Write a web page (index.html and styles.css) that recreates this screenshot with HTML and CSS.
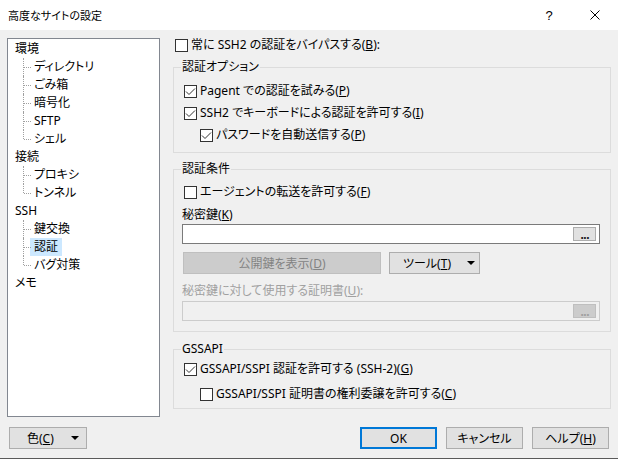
FILE: index.html
```html
<!DOCTYPE html>
<html>
  <head>
    <title>高度なサイトの設定</title>
    <meta charset="UTF-8" />
    <link rel="stylesheet" href="styles.css">
  </head>
  <body>
    <div class="window">
      <div class="titlebar">
        <span class="title">高度なサイトの設定</span>
        <span class="tb-btn tb-help">?</span>
        <span class="tb-btn tb-close">
          <svg width="10" height="10" viewBox="0 0 10 10"><path d="M0.5 0.5 L9.5 9.5 M9.5 0.5 L0.5 9.5" stroke="#000" stroke-width="1" fill="none"/></svg>
        </span>
      </div>

      <div class="main">
        <ul class="tree">
          <li><span class="node">環境</span>
            <ul class="children">
              <li><span class="node">ディレクトリ</span></li>
              <li><span class="node">ごみ箱</span></li>
              <li><span class="node">暗号化</span></li>
              <li><span class="node">SFTP</span></li>
              <li><span class="node">シェル</span></li>
            </ul>
          </li>
          <li><span class="node">接続</span>
            <ul class="children">
              <li><span class="node">プロキシ</span></li>
              <li><span class="node">トンネル</span></li>
            </ul>
          </li>
          <li><span class="node">SSH</span>
            <ul class="children">
              <li><span class="node">鍵交換</span></li>
              <li><span class="node selected">認証</span></li>
              <li><span class="node">バグ対策</span></li>
            </ul>
          </li>
          <li><span class="node">メモ</span></li>
        </ul>

        <div class="panel">
          <div class="check top"><span class="box"></span>常に SSH2 の認証をバイパスする(<u>B</u>):</div>

          <fieldset class="group g1">
            <legend>認証オプション</legend>
            <div class="check first"><span class="box"><svg width="11" height="11" viewBox="0 0 11 11"><polyline points="1,5.5 4,8.5 10,2.5" fill="none" stroke="#333" stroke-width="1"/></svg></span>Pagent での認証を試みる(<u>P</u>)</div>
            <div class="check"><span class="box"><svg width="11" height="11" viewBox="0 0 11 11"><polyline points="1,5.5 4,8.5 10,2.5" fill="none" stroke="#333" stroke-width="1"/></svg></span>SSH2 でキーボードによる認証を許可する(<u>I</u>)</div>
            <div class="check indent"><span class="box"><svg width="11" height="11" viewBox="0 0 11 11"><polyline points="1,5.5 4,8.5 10,2.5" fill="none" stroke="#333" stroke-width="1"/></svg></span>パスワードを自動送信する(<u>P</u>)</div>
          </fieldset>

          <fieldset class="group g2">
            <legend>認証条件</legend>
            <div class="check first"><span class="box"></span>エージェントの転送を許可する(<u>F</u>)</div>
            <div class="field-label">秘密鍵(<u>K</u>)</div>
            <div class="pathbox"><span class="browse">...</span></div>
            <div class="btn-row">
              <button class="btn key-btn" disabled>公開鍵を表示(<u>D</u>)</button>
              <button class="btn tool-btn"><span>ツール(<u>T</u>)</span>
                <svg width="8" height="4" viewBox="0 0 8 4"><polygon points="0,0 8,0 4,4" fill="#000"/></svg>
              </button>
            </div>
            <div class="field-label cert-label">秘密鍵に対して使用する証明書(<u>U</u>):</div>
            <div class="pathbox off"><span class="browse">...</span></div>
          </fieldset>

          <fieldset class="group g3">
            <legend>GSSAPI</legend>
            <div class="check first"><span class="box"><svg width="11" height="11" viewBox="0 0 11 11"><polyline points="1,5.5 4,8.5 10,2.5" fill="none" stroke="#333" stroke-width="1"/></svg></span>GSSAPI/SSPI 認証を許可する (SSH-2)(<u>G</u>)</div>
            <div class="check indent second"><span class="box"></span>GSSAPI/SSPI 証明書の権利委譲を許可する(<u>C</u>)</div>
          </fieldset>
        </div>
      </div>

      <div class="footer">
        <button class="btn color-btn"><span>色(<u>C</u>)</span>
          <svg width="8" height="4" viewBox="0 0 8 4"><polygon points="0,0 8,0 4,4" fill="#000"/></svg>
        </button>
        <span class="spacer"></span>
        <button class="btn dlg-btn default">OK</button>
        <button class="btn dlg-btn">キャンセル</button>
        <button class="btn dlg-btn">ヘルプ(<u>H</u>)</button>
      </div>
    </div>
  </body>
</html>
```

FILE: styles.css
```css
*{
    box-sizing: border-box;
}
body{
    margin: 0;
    font-family: "Noto Sans", "Noto Sans CJK JP", sans-serif;
    font-size: 12px;
    font-feature-settings: "palt";
    color: #000;
    background: #f0f0f0;
}
.window{
    width: 618px;
    height: 459px;
    display: flex;
    flex-direction: column;
    border-bottom: 1px solid #5a5a5a;
    overflow: hidden;
}

/* title bar */
.titlebar{
    flex: none;
    height: 30px;
    background: #fff;
    display: flex;
    align-items: center;
    padding-left: 8px;
}
.title{
    flex: 1;
    font-size: 11px;
}
.tb-btn{
    width: 46px;
    height: 30px;
    display: flex;
    align-items: center;
    justify-content: center;
}
.tb-help{
    font-family: "Liberation Sans", sans-serif;
    font-size: 13px;
}

/* main area */
.main{
    display: flex;
    gap: 13px;
    padding: 8px 7px 0;
}

.tree{
    flex: none;
    width: 153px;
    height: 379px;
    margin: 0;
    padding: 1px 0 0;
    list-style: none;
    background: #fff;
    border: 1px solid #828790;
}
.tree li{
    line-height: 18px;
}
.tree > li > .node{
    padding-left: 3px;
    margin-left: 4px;
}
.node{
    display: inline-block;
    height: 18px;
    padding: 0 4px;
}
.node.selected{
    background: #cce8ff;
}
.children{
    margin: 0;
    padding: 0;
    list-style: none;
}
.children li{
    position: relative;
    padding-left: 22px;
}
.children li::before{
    content: '';
    position: absolute;
    left: 15px;
    top: 0;
    bottom: 0;
    border-left: 1px dotted #a0a0a0;
}
.children li:last-child::before{
    bottom: 9px;
}
.children li::after{
    content: '';
    position: absolute;
    left: 16px;
    top: 9px;
    width: 7px;
    border-top: 1px dotted #a0a0a0;
}

/* right panel */
.panel{
    width: 438px;
    display: flex;
    flex-direction: column;
}
.check{
    display: flex;
    align-items: center;
    height: 22px;
    line-height: 16px;
    white-space: nowrap;
}
.check.top{
    height: 14px;
    margin-left: 2px;
}
.box{
    flex: none;
    width: 13px;
    height: 13px;
    margin-right: 3px;
    border: 1px solid #333;
    background: #fff;
    display: flex;
    align-items: center;
    justify-content: center;
}
.indent{
    margin-left: 16px;
}

.group{
    margin: 0;
    min-width: 0;
    padding: 0 10px;
    border: 1px solid #dcdcdc;
}
.group legend{
    margin-left: -3px;
    padding: 0 1px;
    line-height: 16px;
}
.g1{
    margin-top: 7px;
    padding-bottom: 6px;
}
.g1 .first{
    margin-top: 5px;
}
.g2{
    margin-top: 8px;
    padding-bottom: 10px;
}
.g2 .first{
    margin-top: 4px;
}
.g3{
    margin-top: 9px;
    padding-bottom: 3px;
}
.g3 .first{
    margin-top: 1px;
}
.g3 .second{
    margin-top: 3px;
}

.field-label{
    height: 18px;
    line-height: 18px;
    margin: 3px 0 0 -2px;
}
.cert-label{
    margin-top: 8px;
    color: #a0a0a0;
}
.pathbox{
    width: 418px;
    height: 20px;
    margin-left: -2px;
    padding-right: 3px;
    display: flex;
    align-items: center;
    justify-content: flex-end;
    background: #fff;
    border: 1px solid #7a7a7a;
}
.pathbox.off{
    margin-top: 1px;
    background: #f0f0f0;
    border-color: #cccccc;
}
.browse{
    width: 23px;
    height: 14px;
    padding-top: 3px;
    font-family: "DejaVu Sans", sans-serif;
    font-size: 10px;
    font-weight: bold;
    line-height: 10px;
    text-align: center;
    letter-spacing: -1px;
    color: #222;
    background: #e1e1e1;
    border: 1px solid #adadad;
}
.pathbox.off .browse{
    color: #a0a0a0;
    background: #cccccc;
    border-color: #bfbfbf;
}

.btn{
    height: 22px;
    padding: 0;
    font: inherit;
    color: #000;
    background: #e1e1e1;
    border: 1px solid #adadad;
    display: flex;
    align-items: center;
    justify-content: center;
}
.btn-row{
    display: flex;
    gap: 8px;
    margin: 8px 0 0 -1px;
}
.key-btn{
    width: 198px;
    color: #838383;
    background: #cccccc;
    border-color: #bfbfbf;
}
.tool-btn{
    width: 91px;
    justify-content: space-between;
    padding: 0 4px 0 13px;
}

/* footer */
.footer{
    display: flex;
    gap: 9px;
    margin-top: 10px;
    padding: 0 9px;
}
.spacer{
    flex: 1;
}
.color-btn{
    width: 78px;
    justify-content: space-between;
    padding: 0 7px 0 17px;
}
.dlg-btn{
    width: 77px;
}
.dlg-btn.default{
    border: 2px solid #0078d7;
}
```
